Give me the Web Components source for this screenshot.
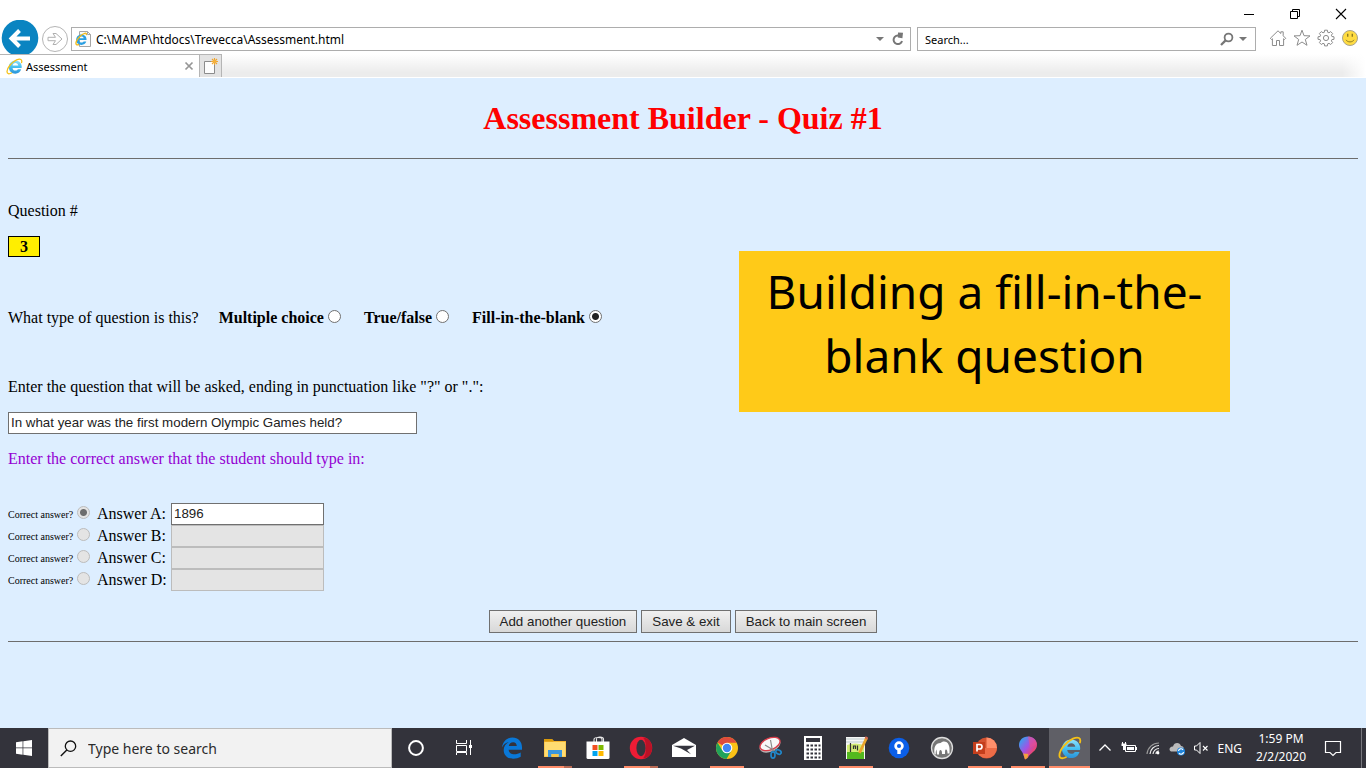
<!DOCTYPE html>
<html lang="en">
<head>
<meta charset="utf-8">
<title>Assessment</title>
<style>
  html, body { margin: 0; }
  body { font-family: "Noto Sans", "Open Sans", sans-serif; font-size: 12px; color: #000; background: #def; }
</style>
</head>
<body>
<desktop-frame>
  <browser-bar slot="top" address="C:\MAMP\htdocs\Trevecca\Assessment.html" tab="Assessment"></browser-bar>
  <quiz-builder heading="Assessment Builder - Quiz #1" number="3">
    <caption-note>Building a fill-in-the-blank question</caption-note>
  </quiz-builder>
  <task-bar slot="bottom"></task-bar>
</desktop-frame>

<script>
const ieLogo = `<svg viewBox="0 0 24 24"><defs><linearGradient id="b" x1="0" y1="0" x2="0" y2="1"><stop offset="0" stop-color="#8fe0fb"/><stop offset=".5" stop-color="#45bff0"/><stop offset="1" stop-color="#2b93d8"/></linearGradient></defs>
<path fill="url(#b)" d="M22 14H9.200c.3 2.300 1.800 3.800 4.100 3.800 1.600 0 2.800-.7 3.500-1.900h4.700c-1.200 3.800-4.300 6.200-8.300 6.200-5.200 0-9.200-3.900-9.200-9.100S8 3.600 13.200 3.600 22.200 7.500 22.200 12.500zM9.300 10.700h8c-.3-2.200-1.900-3.500-4-3.500s-3.700 1.300-4 3.500z"/>
<path fill="none" stroke="#f5c117" stroke-width="1.800" stroke-linecap="round" d="M22 6.500C23.300 2 20.300.4 15 2.600 8.500 5.600 1.600 13.500 1.400 19.200c0 3.400 2.800 3.800 6.500 2"/></svg>`;

const icons = {
  ie: ieLogo,
  back: `<svg viewBox="0 0 40 40"><circle cx="20" cy="19" r="18.300" fill="#0a84c1"/><path d="M12 19.500h18M19.500 11.500l-8 8 8 8" fill="none" stroke="#fff" stroke-width="4"/></svg>`,
  forward: `<svg viewBox="0 0 28 28"><circle cx="14" cy="14" r="12.500" fill="#fff" stroke="#b5b5b5"/><path d="M7 12.300h7.500l-2.500-3.800h3l6 5.500-6 5.500h-3l2.500-3.800H7z" fill="#fff" stroke="#b0b0b0"/></svg>`,
  page: `<svg viewBox="0 0 18 18"><path d="M4.500 1.500h8l3 3v12h-11z" fill="#fafafa" stroke="#a5a5a5"/><path d="M12.500 1.500v3h3" fill="none" stroke="#a5a5a5"/><path fill="#2a9fe2" d="M11.600 10H4c.3 1.800 1.200 2.600 2.600 2.600 1 0 1.600-.4 2-1h2.700c-.8 2.200-2.500 3.300-4.800 3.300-3.200 0-5.300-2.200-5.300-5.200s2.100-5.300 5.200-5.300 5.400 2.200 5.200 5.600zM4 8.200h4.700C8.500 7 7.600 6.400 6.400 6.400S4.300 7 4 8.200z"/><path d="M11.300 5.200C12 2 8.500 3 5.400 6 2 9.200 0 13 1.400 14.500c.6.6 1.600.4 2.600-.1" fill="none" stroke="#f0b817" stroke-width="1.300"/></svg>`,
  caret: `<svg viewBox="0 0 8 8"><path d="M0 2h8L4 6z" fill="#777"/></svg>`,
  refresh: `<svg viewBox="0 0 14 14"><path d="M11 9A4.300 4.300 0 1 1 8.500 3.800" fill="none" stroke="#777" stroke-width="2"/><path d="M7 .4l5 .4-.6 5.400-4.600-.8z" fill="#777"/></svg>`,
  lens: `<svg viewBox="0 0 14 14"><circle cx="8.500" cy="5.500" r="3.900" fill="none" stroke="#777" stroke-width="1.800"/><path d="M5.600 8.400L1 13" stroke="#777" stroke-width="2.300"/></svg>`,
  home: `<svg viewBox="0 0 18 18"><path d="M1.300 9.300L9 1.800l2.800 2.700V2.800h2.400v4l2.500 2.500-1.200 1.200-.9-.8v6.800h-4.100v-5h-3v5H3.400V9.700l-.9.800z" fill="#fff" stroke="#8c8c8c" stroke-linejoin="round"/></svg>`,
  star: `<svg viewBox="0 0 18 18"><path d="M9 1.200l2 5.500 6 .2-4.700 3.600 1.700 5.800L9 13l-5 3.300 1.700-5.800L1 6.900l6-.2z" fill="#fff" stroke="#8c8c8c" stroke-linejoin="round"/></svg>`,
  gear: `<svg viewBox="0 0 18 18"><path d="M7.600 1.200h2.800l.3 2.100 1.300.5 1.700-1.200 1.900 1.900-1.200 1.700.5 1.300 2.100.3v2.500l-2.100.3-.5 1.300 1.200 1.700-1.900 1.900-1.700-1.200-1.300.5-.3 2.100H7.600l-.3-2.100-1.300-.5-1.700 1.200-1.900-1.900 1.200-1.700-.5-1.300-2.100-.3V7.800l2.100-.3.5-1.300-1.200-1.700 1.900-1.900L6 3.800l1.300-.5z" fill="#fff" stroke="#8c8c8c"/><circle cx="9" cy="9" r="2.600" fill="none" stroke="#8c8c8c"/></svg>`,
  smile: `<svg viewBox="0 0 18 18"><circle cx="9" cy="9" r="7.500" fill="#ffdc42" stroke="#aaa48c"/><path d="M6.700 4.800v3M11.300 4.800v3" stroke="#8f7c22" stroke-width="1.400"/><path d="M5 10.800c1.500 2.800 6.500 2.800 8 0" fill="none" stroke="#8f7c22"/></svg>`,
  min: `<svg viewBox="0 0 12 12"><path d="M1 6.500h10" stroke="#000"/></svg>`,
  restore: `<svg viewBox="0 0 12 12"><path d="M1.500 3.500h7v7h-7zM3.500 3.500v-2h7v7h-2" fill="none" stroke="#000"/></svg>`,
  close: `<svg viewBox="0 0 12 12"><path d="M1 1l10 10M11 1L1 11" stroke="#000" stroke-width="1.100"/></svg>`,
  tabclose: `<svg viewBox="0 0 10 10"><path d="M1.500 1.500l7 7M8.500 1.500l-7 7" stroke="#969696" stroke-width="1.700"/></svg>`,
  newtab: `<svg viewBox="0 0 18 18"><path d="M1.500 4.500h10v12h-10z" fill="#fdfdfd" stroke="#8c8c8c"/><g stroke="#efa42e" stroke-width="1.100"><path d="M11.500 1v7M8 4.500h7M9 2l5 5M14 2L9 7"/></g><circle cx="11.500" cy="4.500" r="1.800" fill="#f5b13b"/></svg>`,
  win: `<svg viewBox="0 0 16 16"><path fill="#fff" d="M0 2.200l6.600-.9v6.300H0zM7.300 1.200L16 0v7.600H7.300zM0 8.300h6.600v6.400L0 13.800zM7.300 8.300H16V16l-8.700-1.200z"/></svg>`,
  find: `<svg viewBox="0 0 17 17"><circle cx="10.500" cy="6.200" r="5.200" fill="none" stroke="#111" stroke-width="1.300"/><path d="M6.800 10L.8 16" stroke="#111" stroke-width="1.400"/></svg>`,
  cortana: `<svg viewBox="0 0 24 24"><circle cx="12" cy="12" r="6.900" fill="none" stroke="#fff" stroke-width="2"/></svg>`,
  taskview: `<svg viewBox="0 0 24 24"><g fill="none" stroke="#fff"><path d="M4.500 4v3.500h10V4M4.500 9.500h10v6h-10zM4.500 19v-2.500h10V19M18.500 4v15"/></g><path d="M17 9h3v3h-3z" fill="#fff"/></svg>`,
  edge: `<svg viewBox="0 0 24 24"><path fill="#0a78d7" d="M2 11.500C3 5 7.400 1.500 12.500 1.500c5.600 0 9.500 4 9.500 9.800v2.500H8.600c.3 3.200 2.700 4.500 5.700 4.500 2.200 0 4.600-.7 6.400-1.800v4.300c-2 1.300-4.800 2-7.400 2C7.400 22.800 3.700 19.300 3.700 14c0-3.600 2-6.500 5.200-8C5.800 6.500 3.300 8.600 2 11.500zM8.800 10h8c-.2-2.300-1.400-3.700-3.600-3.700-2.400 0-4 1.500-4.400 3.700z"/></svg>`,
  explorer: `<svg viewBox="0 0 24 24"><path d="M1 3h8l2 2h12v16H1z" fill="#f7b52e"/><path d="M1 3h8l1.500 2.500H1z" fill="#d99a0b"/><path d="M1.500 6h21v14.500h-21z" fill="#ffdc72"/><path d="M5 21v-7h14v7h-3.500v-3h-7v3z" fill="#3997df"/><path d="M8.500 18h7v3h-7z" fill="#f8c64c"/></svg>`,
  store: `<svg viewBox="0 0 24 24"><path d="M8 6V3.500C8 .8 16 .8 16 3.500V6M10.500 6V3C10.500 0 17.500.5 17.500 3v3" fill="none" stroke="#e8e8e8" stroke-width="1.100"/><path d="M.5 5.500h23v16q0 1.500-1.500 1.500H2Q.5 23 .5 21.500z" fill="#fff"/><path d="M6.500 9h5v5h-5z" fill="#f25022"/><path d="M12.500 9h5v5h-5z" fill="#7fba00"/><path d="M6.500 15h5v5h-5z" fill="#00a4ef"/><path d="M12.500 15h5v5h-5z" fill="#ffb900"/></svg>`,
  opera: `<svg viewBox="0 0 24 24"><circle cx="12" cy="12" r="11.200" fill="#ee1c35"/><path d="M14 1.800c12-.5 12 21 0 20.400 4-3 4-17.400 0-20.400z" fill="#b91226"/><ellipse cx="12" cy="12" rx="4.600" ry="8.300" fill="#35353e"/></svg>`,
  mail: `<svg viewBox="0 0 24 24"><path d="M0 9L12 2l12 7v12H0z" fill="#fff"/><path d="M1 9.800h22L15 14l4 4.300L9 12.500z" fill="#35353e"/></svg>`,
  chrome: `<svg viewBox="0 0 24 24"><circle cx="12" cy="12" r="11" fill="#fbc116"/><path d="M12 12L2.500 6.500A11 11 0 0 1 21.600 6.700H12z" fill="#df4b3c"/><path d="M2.500 6.500A11 11 0 0 0 11.500 23l5-8.500L7 14z" fill="#21a35b"/><circle cx="12" cy="12" r="5.300" fill="#fff"/><circle cx="12" cy="12" r="4.200" fill="#4285f4"/></svg>`,
  snip: `<svg viewBox="0 0 24 24"><ellipse cx="12" cy="9.500" rx="11" ry="6.300" transform="rotate(-22 12 9.500)" fill="#b9b9b9"/><ellipse cx="12" cy="8" rx="10.500" ry="5.800" transform="rotate(-22 12 8)" fill="#f7f7f7" stroke="#da3c49" stroke-width="1.300"/><path d="M12.500 4l2 11M7 9l10 6" stroke="#8b8b8b" stroke-width="1.200"/><g fill="none" stroke="#2187c9" stroke-width="1.700"><ellipse cx="15" cy="19" rx="2" ry="3.200"/><ellipse cx="20.500" cy="16" rx="2.800" ry="2" transform="rotate(30 20.500 16)"/></g></svg>`,
  calc: `<svg viewBox="0 0 24 24"><path d="M3 0h18v24H3z" fill="#fff"/><path d="M5 2h14v4H5z" fill="#35353e"/><g stroke="#35353e" stroke-width="2" stroke-dasharray="2.500 1.500"><path d="M5.500 9.500h14M5.500 13.500h14M5.500 17.500h14M5.500 21.500h14"/></g></svg>`,
  notepad: `<svg viewBox="0 0 24 24"><path d="M2 1h19v22H2z" fill="#f6f6f6"/><path d="M2 3h19M2 6h19" stroke="#bcc" stroke-width="1"/><path d="M3 9q8-3 17 0v14H3z" fill="#d3ec74"/><path d="M3 16h17v7H3z" fill="#53b91e"/><path d="M6.500 7v9M9.500 13v-3h2v3M13.500 9.500v5" stroke="#333" fill="none" stroke-width="1.200"/><path d="M22.500 2l-7 15" stroke="#e8a52d" stroke-width="2.800"/><path d="M23 1l-1 2" stroke="#d56a52" stroke-width="3"/></svg>`,
  source: `<svg viewBox="0 0 24 24"><circle cx="12" cy="12" r="10.300" fill="#0b5fe8"/><circle cx="12" cy="10" r="3.400" fill="none" stroke="#fff" stroke-width="2.700"/><path d="M10.300 13h3.400v5h-3.400z" fill="#fff"/></svg>`,
  mamp: `<svg viewBox="0 0 24 24"><circle cx="12" cy="12" r="10.500" fill="#777" stroke="#ddd" stroke-width="1.300"/><path d="M4.500 18c-1-7 1-11 6-11 2-2.500 7-2 8 1.500 1.500 3 1 6 1 9h-2c0-2-.5-4-1.500-4s-1 2-1 4.500h-3c0-3-.5-4-1.500-4s-1.500 2-1.500 4.500H7l-.5-5c-.7 1-.9 3-.7 5z" fill="#fff"/></svg>`,
  ppt: `<svg viewBox="0 0 24 24"><circle cx="13.500" cy="12" r="10.500" fill="#d35230"/><path d="M13.500 1.500A10.500 10.500 0 0 1 24 12H13.500z" fill="#ff8f6b"/><path d="M3 12h21a10.500 10.500 0 0 1-20 4z" fill="#ed6c47"/><path d="M0 6h12v12H0z" fill="#c43e1c"/><path d="M4 15.500V8.500h2.700q2.300 0 2.300 2.200t-2.300 2.300H4" fill="none" stroke="#fff" stroke-width="1.700"/></svg>`,
  paint: `<svg viewBox="0 0 24 24"><defs><linearGradient id="p" x1="0" y1="0" x2="1" y2="1"><stop offset="0" stop-color="#16b9f1"/><stop offset=".45" stop-color="#a252e4"/><stop offset=".7" stop-color="#e7457c"/><stop offset="1" stop-color="#ffb21c"/></linearGradient></defs><path d="M12 .5C6.500.5 3 4.500 3 9.200c0 4 4 6.500 4.500 10L9 23.500l3-2c2-4.500 9-6.500 9-12.500C21 4.500 17.500.5 12 .5z" fill="url(#p)"/><path d="M7.300 17.500l5 .5-.8 4-2.500 1.500z" fill="#f2a33b"/><path d="M12 .5C16 .5 20 3 21 8L14 12z" fill="#ed4e8b" opacity=".6"/></svg>`,
  up: `<svg viewBox="0 0 16 16"><path d="M2.500 10.500L8 5l5.500 5.500" fill="none" stroke="#fff" stroke-width="1.300"/></svg>`,
  battery: `<svg viewBox="0 0 16 16"><path d="M4.500 5.500h10v6h-10z" fill="none" stroke="#fff"/><path d="M6 7h7v3H6z" fill="#fff"/><path d="M15 7h1v3h-1zM.5 3.500h5v2.500h-5zM2 6h2v4H2z" fill="#fff"/><path d="M1.500 2v2M4.500 2v2" stroke="#fff"/></svg>`,
  wifi: `<svg viewBox="0 0 16 16"><g fill="none" stroke-width="1.200"><path d="M2 14A12 12 0 0 1 14 3" stroke="#999"/><path d="M5 14a9 9 0 0 1 9-8.500M8 14a6 6 0 0 1 6-5.500M11 14a3 3 0 0 1 3-3" stroke="#eee"/></g><circle cx="13" cy="13" r="1.400" fill="#fff"/></svg>`,
  cloud: `<svg viewBox="0 0 16 16"><path d="M2 11.500C-1 10 1 6 4 6.500 5 2 11 2 12 6c3 0 4 4 1 5.500z" fill="#bbb"/><circle cx="12" cy="11.500" r="4" fill="#2085db"/><path d="M9.500 11a2.500 2.500 0 0 1 4.500-1.200M14.500 12a2.500 2.500 0 0 1-4.500 1.200" fill="none" stroke="#fff" stroke-width="1.200"/></svg>`,
  mute: `<svg viewBox="0 0 16 16"><path d="M1.500 6h2L7 2.500v11L3.500 10h-2z" fill="none" stroke="#fff"/><path d="M10 6l4.500 4.500M14.500 6L10 10.500" stroke="#fff" stroke-width="1.100"/></svg>`,
  notice: `<svg viewBox="0 0 18 18"><path d="M1.500 2.500h15v11H12l-3 3-3-3H1.500z" fill="none" stroke="#fff" stroke-width="1.200"/></svg>`
};

function define(name, render) {
  customElements.define(name, class extends HTMLElement {
    connectedCallback() {
      if (!this.shadowRoot) this.attachShadow({ mode: "open" }).innerHTML = render(this);
    }
  });
}

/* A square glyph; its edge length is set by --size. */
define("ui-icon", el => `<style>
  :host { display: block; flex: none; width: var(--size, 16px); height: var(--size, 16px); }
  svg { display: block; width: 100%; height: 100%; }
</style>${icons[el.getAttribute("name")]}`);

define("desktop-frame", () => `<style>
  :host { display: flex; flex-direction: column; min-height: 100vh; }
  main { flex: 1; display: grid; }
</style><slot name="top"></slot><main><slot></slot></main><slot name="bottom"></slot>`);

define("browser-bar", el => `<style>
  :host { display: block; background: #fff; }
  button, input { font: inherit; color: inherit; border: 0; padding: 0; margin: 0; background: none; }
  .caption { height: 20px; box-sizing: border-box; padding: 8px 19px 0 0; display: flex; justify-content: flex-end; gap: 34px; --size: 12px; }
  .nav { height: 34px; overflow: hidden; display: flex; align-items: center; padding-right: 7px; }
  .back { --size: 40px; height: 36px; }
  .forward { --size: 28px; margin: 4px 2px 0 1px; }
  .field { box-sizing: border-box; height: 24px; margin-top: 4px; border: 1px solid #adadad; display: flex; align-items: center; min-width: 0; }
  .field input { flex: 1; min-width: 0; outline: 0; height: 20px; }
  .address { flex: 1; padding: 0 5px 0 3px; gap: 3px; --size: 18px; }
  .search { flex: 0 1 339px; margin-left: 6px; padding: 0 8px 0 7px; gap: 5px; font-size: 11px; }
  .s8 { --size: 8px; } .s14 { --size: 14px; }
  .address .s8 { margin-right: 4px; }
  .tools { display: flex; gap: 6px; --size: 18px; margin: 2px 0 0 13px; }
  .tabs { height: 23px; display: flex; border-bottom: 1px solid #fff; background: linear-gradient(90deg, transparent calc(100% - 24px), #fff), linear-gradient(#fff, #ececec 80%); }
  .tab { box-sizing: border-box; width: 200px; background: #fff; border: 1px solid #b5b5b5; border-width: 1px 1px 0 0; display: flex; align-items: center; padding: 0 5px 0 6px; gap: 3px; --size: 17px; font-size: 11px; }
  .tab span { flex: 1; }
  .new { box-sizing: border-box; width: 22px; border: 1px solid #b5b5b5; border-width: 1px 1px 0 0; background: #e3e3e3; padding-left: 3px; --size: 18px; }
</style>
<div class="caption">
  <button aria-label="Minimize"><ui-icon name="min"></ui-icon></button>
  <button aria-label="Restore"><ui-icon name="restore"></ui-icon></button>
  <button aria-label="Close"><ui-icon name="close"></ui-icon></button>
</div>
<div class="nav">
  <button class="back" aria-label="Back"><ui-icon name="back"></ui-icon></button>
  <button class="forward" aria-label="Forward"><ui-icon name="forward"></ui-icon></button>
  <div class="field address"><ui-icon name="page"></ui-icon>
    <input aria-label="Address" value="${el.getAttribute("address")}">
    <button class="s8" aria-label="Show addresses"><ui-icon name="caret"></ui-icon></button>
    <button class="s14" aria-label="Refresh"><ui-icon name="refresh"></ui-icon></button></div>
  <div class="field search"><input aria-label="Search" value="Search...">
    <button class="s14" aria-label="Go"><ui-icon name="lens"></ui-icon></button>
    <button class="s8" aria-label="Search options"><ui-icon name="caret"></ui-icon></button></div>
  <div class="tools">
    ${["home", "star", "gear", "smile"].map(n => `<button aria-label="${n}"><ui-icon name="${n}"></ui-icon></button>`).join("")}
  </div>
</div>
<div class="tabs">
  <div class="tab"><ui-icon name="ie"></ui-icon><span>${el.getAttribute("tab")}</span>
    <button aria-label="Close tab" style="--size:10px"><ui-icon name="tabclose"></ui-icon></button></div>
  <button class="new" aria-label="New tab"><ui-icon name="newtab"></ui-icon></button>
</div>`);

const radioStyle = `
  input[type=radio] { appearance: none; box-sizing: border-box; flex: none; width: 13px; height: 13px; margin: 0; border: 1px solid #707070; border-radius: 50%; background: #fff; }
  input[type=radio]:checked { background: radial-gradient(circle, #222 0 3px, #fff 4px); }
  input[type=radio]:disabled { border-color: #bcbcbc; background: #e4e4e4; }
  input[type=radio]:checked:disabled { background: radial-gradient(circle, #6d6d6d 0 3px, #e4e4e4 4px); }`;

/* Text boxes and buttons keep the browser's own control text size. */
const fieldStyle = `
  input[type=text] { box-sizing: border-box; height: 22px; margin: 0; padding: 0 2px 1px; border: 1px solid #707070; border-radius: 0; background: #fff; color: #222; font-family: "Liberation Sans", Arial, sans-serif; }
  input[type=text]:disabled { border-color: #bcbcbc; background: #e4e4e4; }`;

define("answer-row", el => {
  const letter = el.getAttribute("letter"), off = el.hasAttribute("off") ? "disabled" : "";
  return `<style>
  :host { display: flex; align-items: center; height: 22px; }
  ${radioStyle}${fieldStyle}
  small { font-size: 10px; padding-top: 2px; }
  .mark { display: flex; align-items: center; gap: 4px; width: 89px; }
  .mark input[type=radio] { margin-bottom: 4px; }
  .name { width: 74px; }
  input[type=text] { width: 153px; }
</style>
<label class="mark"><small>Correct answer?</small><input type="radio" disabled ${off ? "" : "checked"}></label>
<label class="name" for="a">Answer ${letter}:</label>
<input id="a" type="text" value="${el.getAttribute("value") || ""}" ${off}>`;
});

define("quiz-builder", el => `<style>
  :host { display: block; position: relative; background: #def; padding: 22px 8px 0; font: 16px/18px "Liberation Serif", "Times New Roman", serif; }
  ${radioStyle}${fieldStyle}
  h1 { margin: 0 0 22px; font-size: 32px; line-height: 36px; color: #f00; text-align: center; }
  hr { margin: 0; border: 0; border-top: 1px solid #6d6d6d; }
  p { margin: 0; }
  .count { margin: 43px 0 16px; }
  .number { box-sizing: border-box; width: 32px; height: 21px; border: 1px solid #000; background: #fe0; font-weight: bold; line-height: 20px; text-align: center; }
  .types { display: flex; margin: 52px 0 51px; gap: 20px; border: 0; padding: 0; }
  .types label { display: flex; gap: 4px; margin-right: 3px; font-weight: bold; }
  .types input { margin-top: 1px; }
  .prompt { display: flex; flex-direction: column; gap: 16px; }
  .prompt input[type=text] { width: 409px; max-width: 100%; }
  .hint { margin: 16px 0 35px; color: #9400d3; }
  .actions { display: flex; justify-content: center; gap: 4px; margin: 19px 0 8px; }
  button { box-sizing: border-box; height: 23px; padding: 0 10px; border: 1px solid #707070; background: linear-gradient(#f0f0f0, #d8d8d8); color: #222; font-family: "Liberation Sans", Arial, sans-serif; }
  ::slotted(caption-note) { position: absolute; top: 173px; right: 136px; }
</style>
<h1>${el.getAttribute("heading")}</h1>
<hr>
<p class="count">Question #</p>
<div class="number">${el.getAttribute("number")}</div>
<div class="types" role="radiogroup" aria-labelledby="kind">
  <span id="kind">What type of question is this?</span>
  <label>Multiple choice<input type="radio" name="type"></label>
  <label>True/false<input type="radio" name="type"></label>
  <label>Fill-in-the-blank<input type="radio" name="type" checked></label>
</div>
<label class="prompt"><span>Enter the question that will be asked, ending in punctuation like "?" or ".":</span>
  <input type="text" value="In what year was the first modern Olympic Games held?"></label>
<p class="hint">Enter the correct answer that the student should type in:</p>
<answer-row letter="A" value="1896"></answer-row>
<answer-row letter="B" off></answer-row>
<answer-row letter="C" off></answer-row>
<answer-row letter="D" off></answer-row>
<div class="actions"><button>Add another question</button><button>Save &amp; exit</button><button>Back to main screen</button></div>
<hr>
<slot></slot>`);

define("caption-note", () => `<style>
  :host { box-sizing: border-box; width: 491px; padding: 8px 16px 25px; background: #ffca18; color: #000; font: 46px/64px "Noto Sans", "Open Sans", sans-serif; text-align: center; }
</style><slot></slot>`);

define("task-item", el => `<style>
  :host { display: block; width: 43px; }
  button { width: 100%; height: 40px; padding: 0; border: 0; background: none; display: flex; align-items: center; justify-content: center; --size: 24px; }
  :host([wide]) { width: 48px; }
  :host([open]) button { background: linear-gradient(#ff8c69, #ff8c69) center bottom / 34px 2px no-repeat; }
  :host([many]) button { background: linear-gradient(90deg, #ff8c69 26px, #b96a55 26px) center bottom / 34px 2px no-repeat; }
  :host([current]) { width: 41px; }
  :host([current]) button { background: linear-gradient(#5f5f66 38px, #ff8c69 38px); }
</style><button aria-label="${el.getAttribute("icon")}"><ui-icon name="${el.getAttribute("icon")}"></ui-icon></button>`);

define("task-bar", () => `<style>
  :host { display: flex; height: 40px; background: #33333b; color: #fff; }
  .start { width: 48px; border: 0; padding: 0 0 0 16px; background: none; }
  .search { box-sizing: border-box; flex: 0 1 344px; min-width: 0; display: flex; align-items: center; gap: 11px; padding-left: 11px; border: 1px solid #bbb; background: #f2f2f2; --size: 17px; }
  .search input { flex: 1; min-width: 0; border: 0; padding: 0; background: none; outline: 0; font: 14px "Noto Sans", "Open Sans", sans-serif; color: #2b2b2b; }
  .search input::placeholder { color: #2b2b2b; opacity: 1; }
  .apps { display: flex; margin-left: 2px; }
  .tray { flex: 1; display: flex; align-items: center; justify-content: flex-end; gap: 8px; padding-right: 4px; }
  .clock { width: 62px; text-align: center; line-height: 18px; }
  .notice { --size: 18px; border: 0; background: none; padding: 0; margin: 0 11px 0 4px; }
  .peek { width: 1px; height: 40px; background: #77777d; }
</style>
<button class="start" aria-label="Start"><ui-icon name="win"></ui-icon></button>
<label class="search"><ui-icon name="find"></ui-icon><input placeholder="Type here to search" aria-label="Type here to search"></label>
<task-item wide icon="cortana"></task-item><task-item wide icon="taskview"></task-item>
<div class="apps">
  <task-item icon="edge"></task-item><task-item many icon="explorer"></task-item><task-item icon="store"></task-item>
  <task-item many icon="opera"></task-item><task-item icon="mail"></task-item><task-item open icon="chrome"></task-item>
  <task-item icon="snip"></task-item><task-item icon="calc"></task-item><task-item open icon="notepad"></task-item>
  <task-item icon="source"></task-item><task-item icon="mamp"></task-item><task-item open icon="ppt"></task-item>
  <task-item open icon="paint"></task-item><task-item current icon="ie"></task-item>
</div>
<div class="tray">
  <ui-icon name="up"></ui-icon><ui-icon name="battery"></ui-icon><ui-icon name="wifi"></ui-icon><ui-icon name="cloud"></ui-icon><ui-icon name="mute"></ui-icon>
  <span>ENG</span>
  <div class="clock">1:59 PM<br>2/2/2020</div>
  <button class="notice" aria-label="Notifications"><ui-icon name="notice"></ui-icon></button>
  <div class="peek"></div>
</div>`);
</script>
</body>
</html>
